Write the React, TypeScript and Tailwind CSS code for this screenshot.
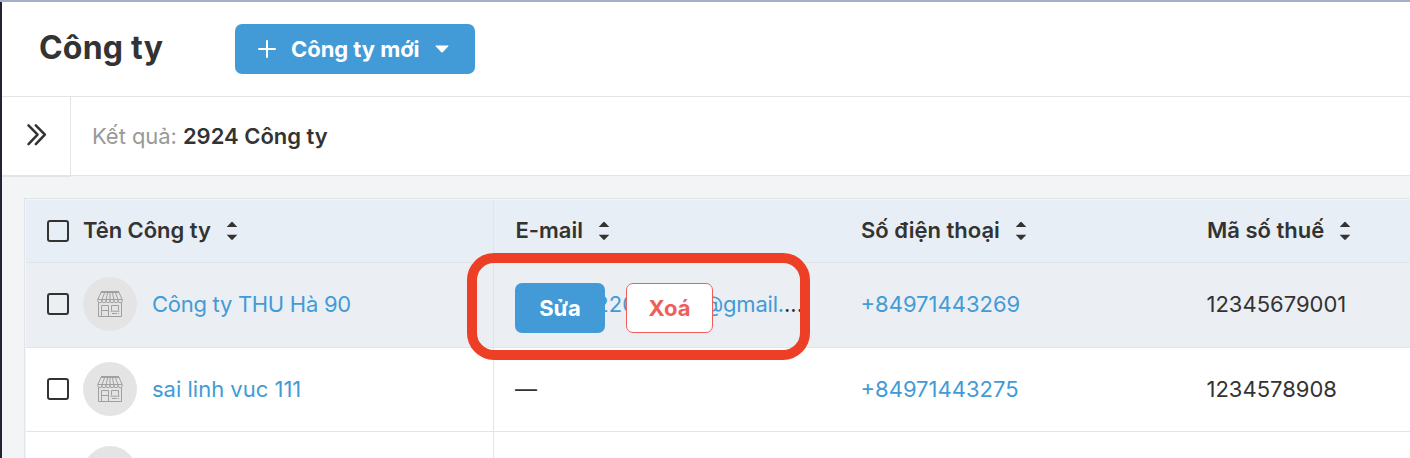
import type { ReactNode } from "react";

function SortIcon() {
  return (
    <svg width="12" height="20" viewBox="0 0 12 20" className="shrink-0 fill-[#333333]">
      <path d="M6 .8 Q6.4 .8 6.8 1.3 L11.3 6 H.7 L5.2 1.3 Q5.6 .8 6 .8Z" />
      <path d="M.7 13.8 H11.3 L6.8 18.5 Q6 19.3 5.2 18.5Z" />
    </svg>
  );
}

function Checkbox() {
  return <span className="block size-[22px] shrink-0 rounded-[3px] border-2 border-[#333333]" />;
}

function StoreAvatar() {
  return (
    <span className="flex size-[54px] shrink-0 items-center justify-center rounded-full bg-[#e4e4e4]">
      <svg width="26" height="26" viewBox="0 0 26 26" fill="none" stroke="#a0a0a0" strokeWidth="1">
        <path d="M4 .5H22M4 1.5H22M4.3 .8L.8 8.5M21.7 .8L25.2 8.5M.8 8.5H25.2" />
        <path d="M7.5 2L5 8.5M10.5 2L9.2 8.5M13 2V8.5M15.5 2L16.8 8.5M18.5 2L21 8.5" />
        <path d="M.8 8.5v1.2a2 2 0 0 0 4.1 0V8.5v1.2a2 2 0 0 0 4.1 0V8.5v1.2a2 2 0 0 0 4 0V8.5v1.2a2 2 0 0 0 4 0V8.5v1.2a2 2 0 0 0 4.1 0V8.5v1.2a2 2 0 0 0 4.1 0V8.5" />
        <path d="M1.5 11.5V25.5H24.5V11.5M4.5 25V14.5H11.5V25M4.5 19.5H11.5M14.5 19.5V14.5H21.5V19.5M13.5 20.2H22.5M15 22.5H20M21 22.5H22" />
      </svg>
    </span>
  );
}

function HeadCell({ children, className }: { children: ReactNode; className: string }) {
  return (
    <div className={`flex items-center gap-[15px] whitespace-nowrap font-semibold ${className}`}>
      {children}
      <SortIcon />
    </div>
  );
}

function NameCell({ children }: { children?: ReactNode }) {
  return (
    <div className="flex items-center border-r border-[#e2e4e8] pl-[21px] text-[#429bd6]">
      <Checkbox />
      <span className="ml-[14px] mr-[15px]">
        <StoreAvatar />
      </span>
      {children}
    </div>
  );
}

export default function App() {
  return (
    <div className="flex h-[458px] w-[1410px] flex-col overflow-hidden border-t-2 border-t-[#a5afc7] bg-[#f3f4f6] font-['Inter','Liberation_Sans',sans-serif] text-[22px] text-[#333333]">
      <div className="flex min-h-0 grow">
        <div className="w-[2px] shrink-0 bg-[#222433]" />
        <main className="flex min-w-0 grow flex-col">
          <header className="flex h-[95px] shrink-0 items-center border-b border-[#e2e4e8] bg-white pl-[37px]">
            <h1 className="w-[196px] whitespace-nowrap pb-[2px] text-[32px] font-bold tracking-[0.2px]">Công ty</h1>
            <button className="flex h-[50px] w-[240px] items-center rounded-[7px] bg-[#429bd6] pl-[23px] font-bold whitespace-nowrap text-white">
              <svg width="18" height="18" viewBox="0 0 18 18" stroke="currentColor" strokeWidth="2" strokeLinecap="round">
                <path d="M9 1V17M1 9H17" />
              </svg>
              <span className="ml-[15px] w-[144px] text-left tracking-[-0.05px]">Công ty mới</span>
              <svg width="14" height="8" viewBox="0 0 14 8" fill="currentColor">
                <path d="M1 .5H13Q14 .5 13.3 1.3L7.7 7.2Q7 7.8 6.3 7.2L.7 1.3Q0 .5 1 .5Z" />
              </svg>
            </button>
          </header>

          <section className="flex h-[79px] shrink-0 bg-white">
            <div className="flex h-[80px] w-[69px] shrink-0 items-center border-r border-b-2 border-[#e2e4e8] bg-white pb-[2px] pl-[24px]">
              <svg width="21" height="24" viewBox="0 0 21 24" fill="none" stroke="#333333" strokeWidth="2.5" strokeLinecap="round" strokeLinejoin="round">
                <path d="M2.5 2.3L11.6 11.7L2.5 21.2M9.8 2.3L18.9 11.7L9.8 21.2" />
              </svg>
            </div>
            <div className="flex grow items-center gap-[6px] border-b border-[#e2e4e8] pl-[21px] whitespace-nowrap">
              <span className="tracking-[-0.05px] text-[#999999]">Kết quả:</span>
              <span className="font-semibold">2924 Công ty</span>
            </div>
          </section>

          <div className="mt-[22px] ml-[22px] flex grow flex-col border-t border-l border-[#e2e4e8] pt-px pl-px">
            <div className="grid h-[63px] shrink-0 grid-cols-[468px_345px_346px_1fr] border-b border-[#e2e4e8] bg-[#e7eef5]">
              <div className="flex items-center border-r border-[#e2e4e8] pb-px pl-[21px]">
                <Checkbox />
                <HeadCell className="ml-[14px]">
                  <span className="tracking-[-0.05px]">Tên Công ty</span>
                </HeadCell>
              </div>
              <HeadCell className="pb-px pl-[21.5px]">E-mail</HeadCell>
              <HeadCell className="pb-px pl-[22px]">Số điện thoại</HeadCell>
              <HeadCell className="pb-px pl-[22px]">Mã số thuế</HeadCell>
            </div>

            <div className="grid h-[85px] shrink-0 grid-cols-[468px_345px_346px_1fr] border-b border-[#e2e4e8] bg-[#ebeef3] *:pb-[2px]">
              <NameCell>
                <span className="tracking-[-0.28px]">Công ty THU Hà 90</span>
              </NameCell>
              <div className="relative flex items-center pl-[21px]">
                <div className="flex w-[288px] justify-end whitespace-nowrap">
                  <span className="text-[#429bd6]">220</span>
                  <span className="ml-[66px] tracking-[-0.2px] text-[#429bd6]">@gmail.</span>
                  <span>...</span>
                </div>
                <div className="absolute top-[20px] left-[21px] flex gap-[21px] font-bold">
                  <button className="h-[50px] w-[90px] rounded-[7px] bg-[#429bd6] text-white">Sửa</button>
                  <button className="h-[50px] w-[87px] rounded-[7px] border border-[#ee5f5b] bg-white text-[#ee5f5b]">Xoá</button>
                </div>
                <div className="absolute top-[-10px] left-[-27px] h-[107px] w-[343px] rounded-[27px] border-10 border-[#ec3f25]" />
              </div>
              <div className="flex items-center pl-[21.5px] text-[#429bd6]">+84971443269</div>
              <div className="flex items-center pl-[21.5px]">12345679001</div>
            </div>

            <div className="grid h-[84px] shrink-0 grid-cols-[468px_345px_346px_1fr] border-b border-[#e2e4e8] bg-white *:pb-px">
              <NameCell>sai linh vuc 111</NameCell>
              <div className="flex items-center pl-[21px]">—</div>
              <div className="flex items-center pl-[21.5px] text-[#429bd6]">+84971443275</div>
              <div className="flex items-center pl-[21.5px]">1234578908</div>
            </div>

            <div className="grid h-[84px] shrink-0 grid-cols-[468px_345px_346px_1fr] bg-white *:pb-[3px]">
              <NameCell />
            </div>
          </div>
        </main>
      </div>
    </div>
  );
}
